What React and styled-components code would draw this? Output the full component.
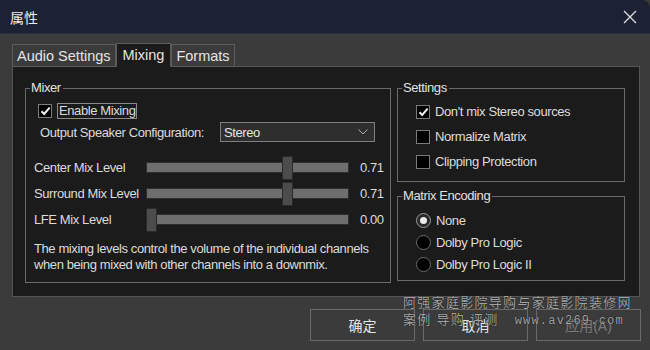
import React from 'react'
import styled, { createGlobalStyle } from 'styled-components'

const GlobalStyle = createGlobalStyle`
  html, body {
    margin: 0;
    padding: 0;
    background: #3b3b3b;
  }
  body {
    font-family: "Liberation Sans", "Noto Sans CJK SC", sans-serif;
    font-size: 13px;
    letter-spacing: -0.4px;
    color: #dcdcdc;
  }
`

const Window = styled.div`
  position: relative;
  width: 650px;
  height: 350px;
  background: #3b3b3b;
  display: flex;
  flex-direction: column;
  overflow: hidden;
`

const TitleBar = styled.div`
  height: 34px;
  flex: none;
  box-sizing: border-box;
  background: #1c2233;
  border-top-right-radius: 8px;
  border-bottom: 1px solid #2c3140;
  display: flex;
  align-items: center;
  justify-content: space-between;
  padding: 0 13px 0 10px;
`

const Title = styled.span`
  font-size: 14px;
  letter-spacing: 0;
  color: #ececec;
`

const Body = styled.div`
  display: flex;
  flex-direction: column;
  padding: 9px 10px 0 12px;
`

const TabRow = styled.div`
  display: flex;
  height: 23px;
  align-items: flex-end;
`

const Tab = styled.div`
  box-sizing: border-box;
  height: ${p => (p.active ? '24px' : '23px')};
  padding: 0 ${p => p.pad || 4}px;
  display: flex;
  align-items: center;
  font-size: 14.5px;
  letter-spacing: 0;
  color: #e4e4e4;
  background: ${p => (p.active ? '#1b1b1b' : '#3b3b3b')};
  border: 1px solid #5c5c5c;
  border-bottom: ${p => (p.active ? '1px solid #1b1b1b' : '1px solid #5c5c5c')};
  margin-bottom: -1px;
  position: relative;
  z-index: ${p => (p.active ? 2 : 1)};
`

const Panel = styled.div`
  box-sizing: border-box;
  width: 628px;
  height: 231px;
  background: #1b1b1b;
  border: 1px solid #555;
  display: flex;
  align-items: flex-start;
  gap: 6px;
  padding: 13px 0 0 12px;
`

const Column = styled.div`
  display: flex;
  flex-direction: column;
  gap: 6px;
`

const Group = styled.fieldset`
  box-sizing: border-box;
  width: ${p => p.width}px;
  margin: 0;
  padding: 0 0 ${p => p.bottom || 0}px 0;
  min-width: 0;
  border: 1px solid #6a6a6a;
  display: flex;
  flex-direction: column;
`

const Legend = styled.legend`
  padding: 0 2px 0 1px;
  margin-left: 4px;
  line-height: 16px;
  color: #e0e0e0;
`

const CheckRow = styled.label`
  display: flex;
  align-items: center;
  gap: 5px;
  height: ${p => p.h || 16}px;
  margin-top: ${p => p.top || 0}px;
  padding-left: ${p => p.indent}px;
`

const Box = styled.span`
  box-sizing: border-box;
  width: 14px;
  height: 14px;
  flex: none;
  background: #000;
  border: 1px solid #7a7a7a;
  display: flex;
  align-items: center;
  justify-content: center;
`

const Round = styled.span`
  box-sizing: border-box;
  width: 15px;
  height: 15px;
  flex: none;
  border-radius: 50%;
  background: ${p => (p.on ? '#2a2a2a' : '#000')};
  border: 1px solid ${p => (p.on ? '#9a9a9a' : '#6a6a6a')};
  display: flex;
  align-items: center;
  justify-content: center;
`

const Dot = styled.span`
  width: 7px;
  height: 7px;
  border-radius: 50%;
  background: #ececec;
`

const FocusText = styled.span`
  border: 1px solid #8a8a8a;
  padding: 0 1px;
  line-height: 14px;
`

const SelectRow = styled.div`
  display: flex;
  align-items: center;
  height: 20px;
  margin-top: 3px;
  padding-left: 14px;
`

const SelectLabel = styled.span`
  width: 180px;
`

const Select = styled.div`
  box-sizing: border-box;
  width: 155px;
  height: 20px;
  background: #2e2e2e;
  border: 1px solid #7e7e7e;
  display: flex;
  align-items: center;
  justify-content: space-between;
  padding: 0 6px 0 3px;
  color: #e6e6e6;
`

const Sliders = styled.div`
  margin-top: 12px;
  display: flex;
  flex-direction: column;
`

const SliderRow = styled.div`
  display: grid;
  grid-template-columns: 112px 203px auto;
  align-items: center;
  height: 26px;
  padding-left: 8px;
`

const Value = styled.span`
  margin-left: 11px;
`

const Track = styled.div`
  position: relative;
  box-sizing: border-box;
  height: 11px;
  background: #6e6e6e;
  border: 1px solid #2e2e2e;
`

const Thumb = styled.div`
  position: absolute;
  top: -7px;
  box-sizing: border-box;
  width: 11px;
  height: 24px;
  background: #4c4c4c;
  border: 1px solid #2a2a2a;
`

const Note = styled.p`
  margin: 9px 0 0 0;
  padding-left: 8px;
  line-height: 16px;
`

const ButtonRow = styled.div`
  display: flex;
  justify-content: flex-end;
  gap: 8px;
  margin-top: 12px;
  margin-right: -1px;
`

const Button = styled.div`
  box-sizing: border-box;
  width: 105px;
  height: 32px;
  border: 1px solid #6a6a6a;
  background: #3b3b3b;
  display: flex;
  align-items: center;
  justify-content: center;
  font-size: 14px;
  letter-spacing: 0;
  color: ${p => (p.disabled ? '#7a7a7a' : '#e6e6e6')};
`

const Watermark = styled.div`
  position: absolute;
  left: 403px;
  top: 294px;
  color: rgba(205, 205, 205, 0.78);
  text-shadow: 0 0 1px #000;
  font-size: 13px;
  line-height: 17px;
  pointer-events: none;
`

const MarkLine = styled.div`
  letter-spacing: ${p => p.spacing}px;
  white-space: pre;
`

const Url = styled.span`
  font-family: "Liberation Mono", monospace;
  font-size: 12px;
  letter-spacing: 1.2px;
  margin-left: 16px;
`

function Check({ on }) {
  return (
    <Box>
      {on && (
        <svg width="11" height="10" viewBox="0 0 11 10">
          <path d="M1.5 5.2 L4.2 8 L9.6 1.6" fill="none" stroke="#f2f2f2" strokeWidth="2" />
        </svg>
      )}
    </Box>
  )
}

function Slider({ label, value }) {
  return (
    <SliderRow>
      <span>{label}</span>
      <Track>
        <Thumb style={{ left: `${value * 192 - 1}px` }} />
      </Track>
      <Value>{value.toFixed(2)}</Value>
    </SliderRow>
  )
}

export default function App() {
  return (
    <Window>
      <GlobalStyle />
      <TitleBar>
        <Title>属性</Title>
        <svg width="14" height="14" viewBox="0 0 14 14">
          <path d="M1 1 L13 13 M13 1 L1 13" stroke="#e0e0e0" strokeWidth="1.3" />
        </svg>
      </TitleBar>
      <Body>
        <TabRow>
          <Tab>Audio Settings</Tab>
          <Tab active pad={6}>Mixing</Tab>
          <Tab>Formats</Tab>
        </TabRow>
        <Panel>
          <Group width={366} bottom={9}>
            <Legend>Mixer</Legend>
            <CheckRow indent={12} top={7}>
              <Check on />
              <FocusText>Enable Mixing</FocusText>
            </CheckRow>
            <SelectRow>
              <SelectLabel>Output Speaker Configuration:</SelectLabel>
              <Select>
                <span>Stereo</span>
                <svg width="10" height="6" viewBox="0 0 10 6">
                  <path d="M0.5 0.5 L5 5 L9.5 0.5" fill="none" stroke="#b0b0b0" strokeWidth="1" />
                </svg>
              </Select>
            </SelectRow>
            <Sliders>
              <Slider label="Center Mix Level" value={0.71} />
              <Slider label="Surround Mix Level" value={0.71} />
              <Slider label="LFE Mix Level" value={0} />
            </Sliders>
            <Note>
              The mixing levels control the volume of the individual channels
              <br />
              when being mixed with other channels into a downmix.
            </Note>
          </Group>
          <Column>
            <Group width={228} bottom={7}>
              <Legend>Settings</Legend>
              <CheckRow indent={18} top={3} h={25}>
                <Check on />
                <span>Don't mix Stereo sources</span>
              </CheckRow>
              <CheckRow indent={18} h={25}>
                <Check />
                <span>Normalize Matrix</span>
              </CheckRow>
              <CheckRow indent={18} h={25}>
                <Check />
                <span>Clipping Protection</span>
              </CheckRow>
            </Group>
            <Group width={228} bottom={5}>
              <Legend>Matrix Encoding</Legend>
              <CheckRow indent={18} top={5} h={22}>
                <Round on>
                  <Dot />
                </Round>
                <span>None</span>
              </CheckRow>
              <CheckRow indent={18} h={22}>
                <Round />
                <span>Dolby Pro Logic</span>
              </CheckRow>
              <CheckRow indent={18} h={22}>
                <Round />
                <span>Dolby Pro Logic II</span>
              </CheckRow>
            </Group>
          </Column>
        </Panel>
        <ButtonRow>
          <Button>确定</Button>
          <Button>取消</Button>
          <Button disabled>应用(A)</Button>
        </ButtonRow>
      </Body>
      <Watermark>
        <MarkLine spacing={1.3}>阿强家庭影院导购与家庭影院装修网</MarkLine>
        <MarkLine spacing={1.3}>
          案例 导购 评测<Url>www.av269.com</Url>
        </MarkLine>
      </Watermark>
    </Window>
  )
}
